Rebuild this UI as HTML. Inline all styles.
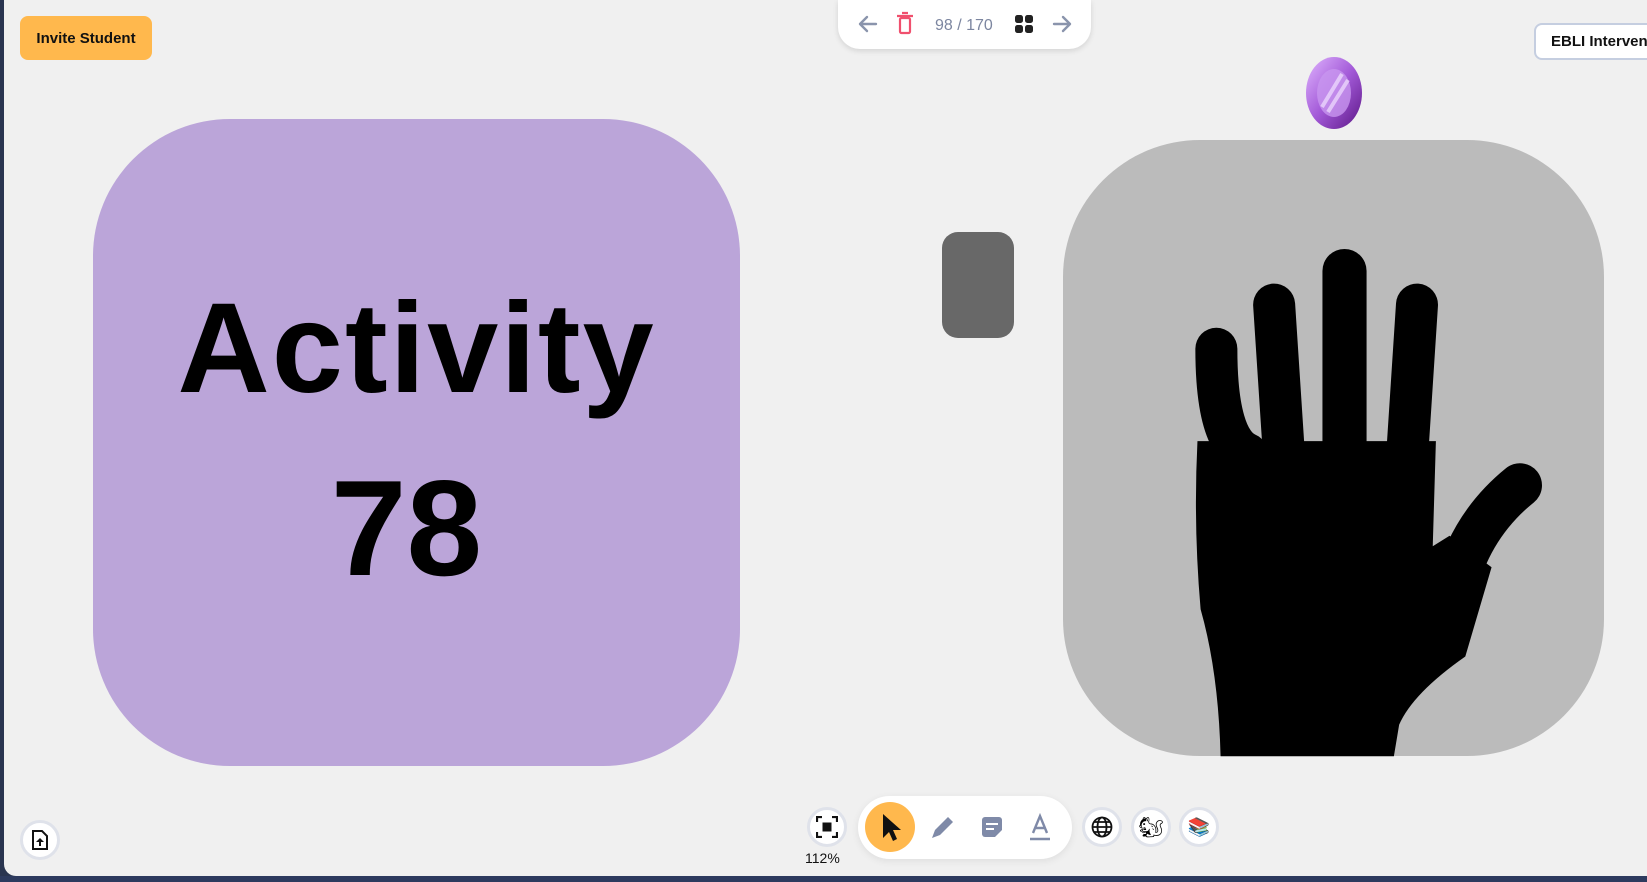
<!DOCTYPE html>
<html><head><meta charset="utf-8"><style>
*{margin:0;padding:0;box-sizing:border-box}
html,body{width:1647px;height:882px;overflow:hidden;background:#2a3550}
body{position:relative;font-family:"Liberation Sans",sans-serif}
#win{position:absolute;left:4px;top:0;width:1643px;height:876px;background:#f0f0f0;border-bottom-left-radius:12px}
.abs{position:absolute}
.circ{position:absolute;width:40px;height:40px;border-radius:50%;background:#fff;border:3px solid #dfe2ea;display:flex;align-items:center;justify-content:center}
</style></head><body>
<div id="win"></div>
<div class="abs" style="left:0;top:876px;width:1647px;height:6px;background:#2d3a5e"></div>

<div class="abs" style="left:20px;top:16px;width:132px;height:44px;background:#ffb84d;border-radius:8px;font-weight:bold;font-size:15px;color:#111;display:flex;align-items:center;justify-content:center">Invite Student</div>

<div class="abs" style="left:838px;top:0;width:253px;height:49px;background:#fff;border-radius:0 0 22px 22px;box-shadow:0 2px 6px rgba(0,0,0,.12)"></div>
<svg class="abs" style="left:838px;top:0" width="253" height="49">
<g stroke="#8a94ac" stroke-width="2.4" fill="none" stroke-linecap="round" stroke-linejoin="round">
<path d="M38 24H22M29 17l-7 7 7 7"/><path d="M216 24h16M225 17l7 7-7 7"/></g>
<g stroke="#f0506e" stroke-width="2.2" fill="none"><rect x="62" y="18" width="10" height="15" rx="1.5"/><path d="M59 16h16M64 13h6"/></g>
<text x="97" y="30" font-size="16" fill="#7c86a0" font-family="Liberation Sans">98 / 170</text>
<g fill="#222"><rect x="177" y="15" width="8" height="8" rx="2.5"/><rect x="187" y="15" width="8" height="8" rx="2.5"/><rect x="177" y="25" width="8" height="8" rx="2.5"/><rect x="187" y="25" width="8" height="8" rx="2.5"/></g>
</svg>

<div class="abs" style="left:1534px;top:23px;width:130px;height:37px;background:#fff;border:2px solid #c5cee0;border-radius:8px;font-weight:bold;font-size:15px;color:#111;padding:8px 0 0 15px;white-space:nowrap">EBLI Intervention</div>

<svg class="abs" style="left:1300px;top:52px" width="70" height="82">
<defs><linearGradient id="g" x1="0" y1="0" x2="1" y2="1"><stop offset="0" stop-color="#e0b5ff"/><stop offset=".5" stop-color="#a35ad8"/><stop offset="1" stop-color="#5c1686"/></linearGradient></defs>
<ellipse cx="34" cy="41" rx="28" ry="36" fill="url(#g)"/>
<ellipse cx="34" cy="41" rx="17" ry="24" fill="#c896ef" opacity=".8"/>
<path d="M22 55L42 22M28 60L48 28" stroke="#f1e0ff" stroke-width="4" opacity=".7"/>
</svg>

<div class="abs" style="left:93px;top:119px;width:647px;height:647px;background:#bba5d9;border-radius:137px"></div>
<div class="abs" style="left:93px;top:285px;width:647px;text-align:center;font-size:128px;font-weight:bold;letter-spacing:2px;line-height:1;color:#000">Activity</div>
<div class="abs" style="left:93px;top:460px;width:647px;text-align:center;font-size:136px;font-weight:bold;line-height:1;color:#000;padding-right:20px">78</div>

<div class="abs" style="left:942px;top:232px;width:72px;height:106px;background:#686868;border-radius:16px"></div>
<div class="abs" style="left:1063px;top:140px;width:541px;height:616px;background:#bbbbbb;border-radius:137px"></div>
<svg class="abs" style="left:0;top:0" width="1647" height="882">
<g transform="scale(1.0504)">
<g stroke="#000" stroke-linecap="round" fill="none">
<path d="M1158 332 Q1158 420 1187 432" stroke-width="40" />
<path d="M1213 290 L1222 428" stroke-width="40"/>
<path d="M1280 258 L1280 428" stroke-width="42"/>
<path d="M1349 290 L1340 428" stroke-width="40"/>
<path d="M1447 462 Q1400 500 1385 560" stroke-width="42"/>
</g>
<path d="M1140 420 L1367 420 L1364 520 L1380 510 L1420 540 L1395 625 Q1345 660 1332 690 L1327 720 L1162 720 Q1160 640 1143 580 Q1136 500 1140 420 Z" fill="#000"/>
</g></svg>

<div class="circ" style="left:20px;top:820px"><svg width="18" height="20"><path d="M2 1h9l5 5v13H2z" fill="none" stroke="#111" stroke-width="2"/><path d="M9 8l-4 4h3v4h2v-4h3z" fill="#111"/></svg></div>

<div class="circ" style="left:807px;top:807px"><svg width="22" height="22" fill="none" stroke="#111" stroke-width="2.2"><path d="M1 6V1h5M16 1h5v5M21 16v5h-5M6 21H1v-5"/><rect x="6.5" y="6.5" width="9" height="9" fill="#111" stroke="none"/></svg></div>
<div class="abs" style="left:805px;top:850px;font-size:14px;color:#111">112%</div>

<div class="abs" style="left:858px;top:796px;width:214px;height:63px;background:#fff;border-radius:32px;box-shadow:0 2px 8px rgba(0,0,0,.08)"></div>
<div class="abs" style="left:865px;top:802px;width:50px;height:50px;border-radius:50%;background:#ffb84d"></div>
<svg class="abs" style="left:858px;top:796px" width="214" height="63">
<path d="M25 18 L25 42 L31 36 L35 45 L39 43 L35 34 L43 34 Z" fill="#111"/>
<path d="M74 42 L77 34 L90 21 L95 26 L82 39 Z" fill="#7f8aa8"/>
<rect x="124" y="21" width="20" height="20" rx="3" fill="#7f8aa8"/><path d="M128 28h12M128 33h8" stroke="#fff" stroke-width="2"/><path d="M144 34l-7 7h7z" fill="#fff"/>
<path d="M175 37 L182 20 L189 37 M177 32h10" stroke="#7f8aa8" stroke-width="2.4" fill="none"/><path d="M172 43h20" stroke="#7f8aa8" stroke-width="2.4"/>
</svg>

<div class="circ" style="left:1082px;top:807px"><svg width="22" height="22" fill="none" stroke="#111" stroke-width="1.8"><circle cx="11" cy="11" r="9.5"/><ellipse cx="11" cy="11" rx="4.5" ry="9.5"/><path d="M1.5 11h19M3 6h16M3 16h16"/></svg></div>
<div class="circ" style="left:1131px;top:807px;font-size:20px">🐿</div>
<div class="circ" style="left:1179px;top:807px;font-size:18px">📚</div>
</body></html>
